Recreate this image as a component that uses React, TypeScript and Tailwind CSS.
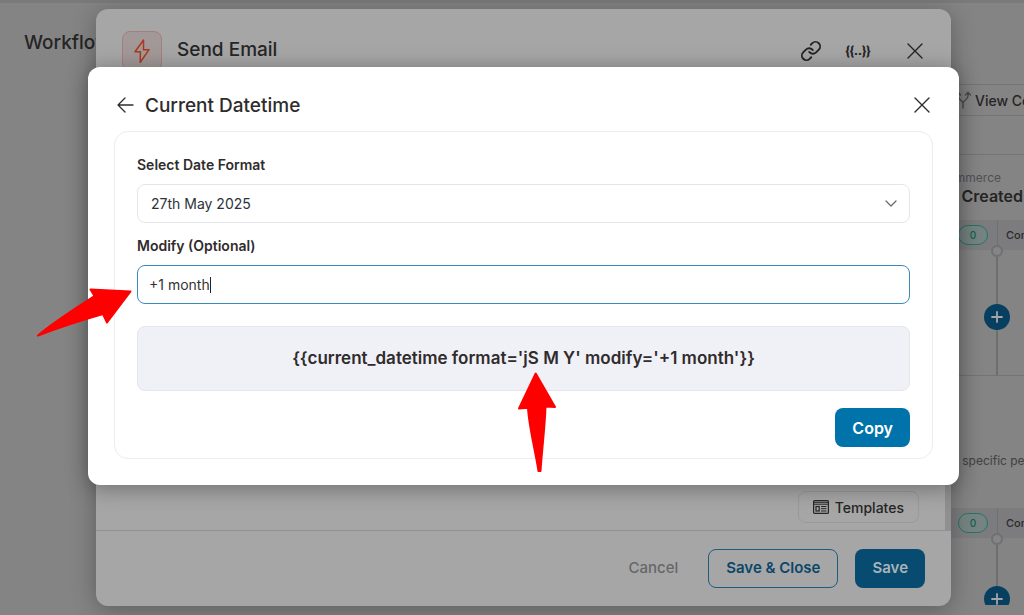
import { useState } from "react";
import type { ReactNode } from "react";
import { Link } from "lucide-react";

const ZapIcon = () => (
  <svg viewBox="0 0 24 24" className="size-6" fill="none" stroke="#a83a1f" strokeWidth="1.500" strokeLinejoin="round" aria-hidden="true">
    <path d="M13.500 1 5 12.800h5.400L10.200 23.500 19 10.700h-5.500z" />
  </svg>
);

const CloseIcon = ({ className }: { className: string }) => (
  <svg viewBox="0 0 16 16" className={className} fill="none" stroke="currentColor" strokeWidth="1.4" strokeLinecap="round" aria-hidden="true">
    <path d="M1 1l14 14M15 1 1 15" />
  </svg>
);

const BackIcon = () => (
  <svg viewBox="0 0 17 16" className="h-4 w-[17px]" fill="none" stroke="currentColor" strokeWidth="1.300" strokeLinecap="round" strokeLinejoin="round" aria-hidden="true">
    <path d="M8 1 1 8l7 7M1 8h15" />
  </svg>
);

const TemplateIcon = () => (
  <svg viewBox="0 0 16 14" className="h-[14px] w-4" fill="none" stroke="currentColor" aria-hidden="true">
    <rect x=".6" y=".6" width="14.800" height="12.800" rx="1" strokeWidth="1.200" />
    <path d="M1 2.300h14M1 4.200h14" strokeWidth="1" />
    <rect x="3" y="6.500" width="3.200" height="4.500" strokeWidth="1.200" />
    <path d="M8 6.500h5.500M8 8.700h5.500M8 11h5.500" strokeWidth="1" />
  </svg>
);

const BranchIcon = () => (
  <svg viewBox="0 0 16 20" className="h-5 w-4 shrink-0" fill="none" stroke="#4b4b4b" strokeWidth="1.400" strokeLinecap="round" strokeLinejoin="round" aria-hidden="true">
    <path d="M8 18v-5c0-2-4.500-3.500-4.500-6V3M8 13c0-2 5-3.500 5-7V2.500M1.500 5l2-2.500 2 2.500M10.500 5 13 2.300 15.500 5" />
  </svg>
);

const AddStep = () => (
  <button type="button" aria-label="Add step" className="flex size-[26px] shrink-0 items-center justify-center rounded-full bg-[#063f60]">
    <svg viewBox="0 0 12 12" className="size-3" stroke="#a5a5a5" strokeWidth="1.800" strokeLinecap="round" aria-hidden="true">
      <path d="M6 1v10M1 6h10" />
    </svg>
  </button>
);

const StepStatus = () => (
  <div className="flex h-[30px] shrink-0 bg-[#7c7c7f] text-[11px] font-medium text-[#2b2b2b]">
    <div className="flex w-[78px] shrink-0 items-center justify-end border-r border-[#707074] pr-[9px]">
      <span className="flex h-5 w-[30px] items-center justify-center rounded-full border border-[#267461] bg-[#758480] text-[10px] text-[#11614f]">0</span>
    </div>
    <span className="flex items-center pl-2">Completed</span>
  </div>
);

const Connector = ({ children }: { children: ReactNode }) => (
  <div className="ml-[64px] flex w-[26px] flex-col items-center">
    <span className="relative -mt-[5px] size-3 shrink-0 rounded-full border-2 border-[#707074] bg-[#858585]" />
    {children}
  </div>
);

const WorkflowPage = () => (
  <main className="flex h-screen justify-between overflow-hidden border-t-3 border-[#7a7a7a] bg-[#848484] text-[#252525]">
    <h1 className="pt-[26px] pl-6 text-[19px] leading-7 font-medium">Workflow</h1>
    <section className="flex w-[104px] flex-col overflow-hidden whitespace-nowrap">
      <div className="mt-[81px] flex h-8 shrink-0 items-center gap-1 border-y border-[#73737a] pl-[35px] text-[14px] font-medium">
        <BranchIcon />
        <a href="#contacts">View Contacts</a>
      </div>
      <div className="mt-[38px] h-[66px] shrink-0 border-t border-[#747474] pt-[11px]">
        <p className="flex w-[81px] justify-end text-[12px] leading-6 text-[#505054]">WooCommerce</p>
        <h2 className="flex w-[103px] justify-end text-[16px] leading-3 font-semibold">Order Created</h2>
      </div>
      <StepStatus />
      <Connector>
        <span className="h-[47px] w-0.5 bg-[#6e6e6e]" />
        <AddStep />
        <span className="h-[45px] w-0.5 bg-[#6e6e6e]" />
      </Connector>
      <div className="flex h-[133px] shrink-0 border-t border-[#747474] pt-[75px]">
        <p className="text-[12px] leading-5 text-[#414141]">From a specific person</p>
      </div>
      <StepStatus />
      <Connector>
        <span className="h-[41px] w-0.5 bg-[#6e6e6e]" />
        <div className="h-[19px] overflow-hidden">
          <AddStep />
        </div>
      </Connector>
    </section>
  </main>
);

const EmailDialog = () => (
  <div className="absolute inset-0 flex justify-center pt-[9px] pb-[9px] pl-[23px]">
    <section className="flex w-full max-w-[855px] flex-col overflow-hidden rounded-xl bg-[#a6a6a6] text-[#252525] shadow-[0_4px_24px_rgba(0,0,0,0.3)]">
      <header className="flex h-[83px] items-center justify-between pr-7 pl-[26px]">
        <div className="flex items-center gap-[15px]">
          <span className="flex size-10 items-center justify-center rounded-lg border border-[#a37f7f] bg-[#a39898]">
            <ZapIcon />
          </span>
          <h2 className="text-[19px] font-medium">Send Email</h2>
        </div>
        <div className="flex items-center">
          <button type="button" aria-label="Copy link"><Link className="size-[22px]" strokeWidth={2} /></button>
          <button type="button" className="ml-6 flex w-6 justify-center font-['Roboto',sans-serif] text-[13px] font-black">{"{{..}}"}</button>
          <button type="button" aria-label="Close email" className="ml-[37px]"><CloseIcon className="size-4" /></button>
        </div>
      </header>
      <div className="flex grow items-end justify-end border-b border-[#919196]">
        <div className="pr-[26px] pb-[7px]">
          <button type="button" className="flex h-8 items-center gap-1.5 rounded-lg border border-[#999] px-[14px] text-[14px] font-medium">
            <TemplateIcon />
            Templates
          </button>
        </div>
        <div className="h-full w-1.5 bg-[#8f8f8f]" />
      </div>
      <footer className="flex h-[75px] items-center justify-end pr-[26px] text-[15px] font-semibold">
        <button type="button" className="mr-[30px] font-medium text-[#66666a]">Cancel</button>
        <button type="button" className="h-[39px] rounded-lg border border-[#1d5c80] px-[17px] text-[#0b466a]">Save &amp; Close</button>
        <button type="button" className="ml-[17px] h-[39px] rounded-lg bg-[#084b70] px-[17px] text-[#a9b4ba]">Save</button>
      </footer>
    </section>
  </div>
);

const DatetimeDialog = () => {
  const [modify, setModify] = useState("+1 month");
  return (
    <div className="absolute inset-0 flex items-start justify-center pt-[67px] pl-[23px]">
      <section role="dialog" aria-labelledby="dialog-title" className="w-full max-w-[871px] rounded-xl bg-white px-[26px] pb-[26px] text-[#302c2c] shadow-[0_3px_22px_rgba(0,0,0,0.35)]">
        <header className="flex h-16 items-center justify-between pt-3 pr-[3px] pl-[3px]">
          <div className="flex items-center gap-[11px]">
            <button type="button" aria-label="Back"><BackIcon /></button>
            <h2 id="dialog-title" className="pt-px text-[19px] leading-6 font-medium">Current Datetime</h2>
          </div>
          <button type="button" aria-label="Close"><CloseIcon className="size-4" /></button>
        </header>
        <form className="flex flex-col rounded-[14px] border border-[#ececf2] px-[22px] pt-[21px] pb-[11px]" onSubmit={(e) => e.preventDefault()}>
          <label htmlFor="format" className="text-[14px] leading-6 font-semibold">Select Date Format</label>
          <div className="relative mt-[7px]">
            <select id="format" className="block h-[39px] w-full appearance-none rounded-lg border border-[#e6e5ee] bg-white px-[13px] text-[14px] text-[#2c3338]">
              <option>27th May 2025</option>
              <option>May 27, 2025</option>
            </select>
            <svg viewBox="0 0 12 8" className="pointer-events-none absolute top-4 right-[13px] h-2 w-3" fill="none" stroke="#6b6b6b" strokeWidth="1.300" strokeLinecap="round" strokeLinejoin="round" aria-hidden="true">
              <path d="m1 1 5 5 5-5" />
            </svg>
          </div>
          <label htmlFor="modify" className="mt-[11px] text-[14px] leading-6 font-semibold">Modify (Optional)</label>
          <label className="mt-[7px] flex h-[39px] items-center rounded-lg border border-[#398bb9] px-[11px]">
            <input id="modify" value={modify} onChange={(e) => setModify(e.target.value)} className="field-sizing-content text-[14px] text-[#333] outline-none" />
            <span className="h-4 w-px bg-[#222]" />
          </label>
          <output className="mt-[22px] flex h-[65px] items-center justify-center rounded-lg border border-[#e6e5ee] bg-[#f0f0f7] text-[17px] font-semibold">
            {`{{current_datetime format='jS M Y' modify='${modify}'}}`}
          </output>
          <button type="button" className="mt-[17px] h-[39px] self-end rounded-lg bg-[#0073aa] px-[17px] text-[16px] font-semibold text-white">Copy</button>
        </form>
      </section>
    </div>
  );
};

const Pointers = () => (
  <div aria-hidden="true">
    <svg viewBox="0 0 96 50" className="absolute top-[288px] left-[36px] h-[50px] w-24" fill="#f00" stroke="#f00" strokeWidth="2" strokeLinejoin="round">
      <path d="M94.500 3.400 54.500 1.500l4 6.500C45 17 19 33 2 47.500 19 41 46 32 67 26l4 8.500Z" />
    </svg>
    <svg viewBox="0 0 40 100" className="absolute top-[372px] left-[517px] h-[100px] w-10" fill="#f00" stroke="#f00" strokeWidth="2" strokeLinejoin="round">
      <path d="M18.700 1.500 2 36.500l9-.7c1 19 7 41 10.500 63.200h2C25 76 28 54 28.500 34.500l9.500.5Z" />
    </svg>
  </div>
);

export default function App() {
  return (
    <div className="relative h-screen overflow-hidden font-['Inter',sans-serif]">
      <WorkflowPage />
      <EmailDialog />
      <DatetimeDialog />
      <Pointers />
    </div>
  );
}
